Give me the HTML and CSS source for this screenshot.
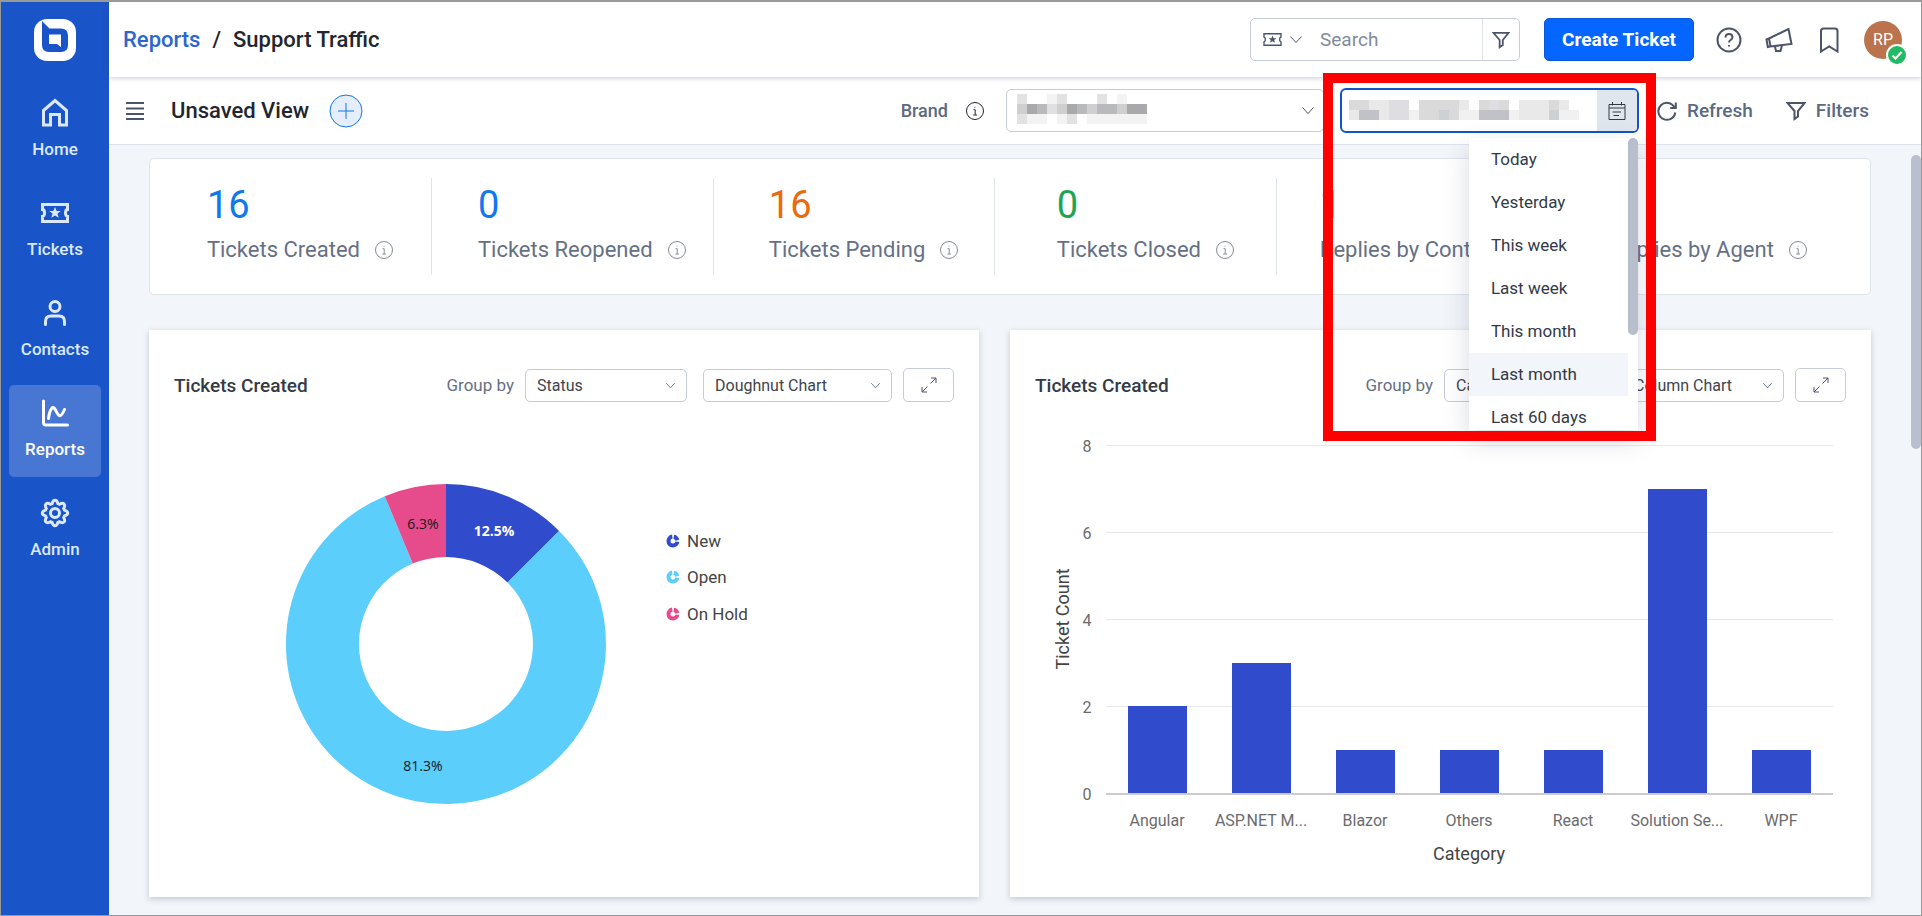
FILE: index.html
```html
<!DOCTYPE html>
<html lang="en">
<head>
	<meta charset="UTF-8">
	<meta name="viewport" content="width=device-width">
	<title>Reports / Support Traffic</title>
	<link rel="stylesheet" href="styles.css">
</head>

<body>
	<!-- shared icons -->
	<svg class="sprite" aria-hidden="true">
		<symbol id="info" viewBox="0 0 20 20">
			<circle cx="10" cy="10" r="8.5"/>
			<path d="M8.5 8.7H10.2V13.8M8.3 14H12M10 5.8V6.6"/>
		</symbol>
		<symbol id="ticket" viewBox="0 0 30 22">
			<path d="M2.5 2.5H27.5V7.5A2 3.5 0 0 0 27.5 14.5V19.5H2.5V14.5A2 3.5 0 0 0 2.5 7.5Z"/>
			<path class="solid" d="M15 5L16.6 9H20.8L17.5 11.6L18.7 15.8L15 13.4L11.3 15.8L12.5 11.6L9.2 9H13.4Z"/>
		</symbol>
		<symbol id="chevron" viewBox="0 0 14 9">
			<path d="M1.5 1.5L7 7.5L12.5 1.5"/>
		</symbol>
		<symbol id="funnel" viewBox="0 0 20 20">
			<path d="M1.5 2H18.5L12 10V15.5L8.5 18V10Z"/>
		</symbol>
		<symbol id="expand" viewBox="0 0 18 18">
			<path d="M11 2H16V7M16 2L10.5 7.5M7 16H2V11M2 16L7.5 10.5"/>
		</symbol>
		<symbol id="ring" viewBox="0 0 14 14">
			<path d="M7.8 2.8A4.5 4.5 0 0 1 11.3 6.2M11.4 7.7A4.5 4.5 0 1 1 6.3 2.6"/>
		</symbol>
	</svg>

	<nav class="sidebar">
		<svg class="logo" viewBox="0 0 42 42">
			<rect width="42" height="42" rx="13" fill="#fff"/>
			<path d="M8 2L15.5 9.5H27Q34 9.5 34 16.5V26Q34 33 27 33H15Q8 33 8 26Z" fill="#1a54c9"/>
			<path d="M15 15.5H27V28L23 25H15Z" fill="#fff"/>
		</svg>
		<a href="#" class="nav-item">
			<svg viewBox="0 0 30 30"><path d="M3.5 12.5L15 2.5L26.5 12.5V27H19.5V16.5H10.5V27H3.5Z"/></svg>
			<span>Home</span>
		</a>
		<a href="#" class="nav-item">
			<svg viewBox="0 -4 30 30"><use href="#ticket" width="30" height="22"/></svg>
			<span>Tickets</span>
		</a>
		<a href="#" class="nav-item">
			<svg viewBox="0 0 30 30"><circle cx="15" cy="8.5" r="5"/><path d="M5.5 26.5V23.5Q5.5 18 11 18H19Q24.5 18 24.5 23.5V26.5"/></svg>
			<span>Contacts</span>
		</a>
		<a href="#" class="nav-item active">
			<svg viewBox="0 0 30 30"><path d="M3.5 3V24.5Q3.5 27 6 27H27.5M8.5 20.5C10 10 13 7 15.5 12S20 22 24.5 11.5"/></svg>
			<span>Reports</span>
		</a>
		<a href="#" class="nav-item">
			<svg viewBox="0 0 30 30">
				<circle cx="15" cy="15" r="4.5"/>
				<path d="M12.1 5.6Q13 2.3 15 2.3T17.9 5.6L19.6 6.3Q22.6 4.6 24 6T23.7 10.4L24.4 12.1Q27.7 13 27.7 15T24.4 17.9L23.7 19.6Q25.4 22.6 24 24T19.6 23.7L17.9 24.4Q17 27.7 15 27.7T12.1 24.4L10.4 23.7Q7.4 25.4 6 24T6.3 19.6L5.6 17.9Q2.3 17 2.3 15T5.6 12.1L6.3 10.4Q4.6 7.4 6 6T10.4 6.3Z"/>
			</svg>
			<span>Admin</span>
		</a>
	</nav>

	<div class="page">
		<header class="topbar">
			<div class="breadcrumb">
				<a href="#">Reports</a>
				<span>/</span>
				<span>Support Traffic</span>
			</div>
			<div class="search">
				<button type="button" class="search-type" aria-label="Search in">
					<svg class="icon-ticket"><use href="#ticket"/></svg>
					<svg class="icon-chevron"><use href="#chevron"/></svg>
				</button>
				<input type="text" placeholder="Search" aria-label="Search">
				<button type="button" class="search-filter" aria-label="Search filter">
					<svg class="icon-filter"><use href="#funnel"/></svg>
				</button>
			</div>
			<button type="button" class="create">Create Ticket</button>
			<div class="tools">
				<button type="button" aria-label="Help">
					<svg viewBox="0 0 28 28"><circle cx="14" cy="14" r="11.5"/><path d="M10.5 11.5Q10.5 8 14 8T17.5 11.3Q17.5 13 15.6 14Q14 15 14 16.5M14 19V20.5"/></svg>
				</button>
				<button type="button" aria-label="Announcements">
					<svg viewBox="0 0 28 28"><path d="M4 12.5L23.5 3L26.5 18L5.5 20.5ZM1.5 13.5L4 12.5L5.5 20.5L2.8 21ZM10 20.5L11 25H15.5L17 19.5"/></svg>
				</button>
				<button type="button" aria-label="Bookmarks">
					<svg viewBox="0 0 28 28"><path d="M6 5Q6 2.5 8.5 2.5H20Q22.5 2.5 22.5 5V25.5L14.2 20.5L6 25.5Z"/></svg>
				</button>
			</div>
			<div class="avatar">RP
				<svg class="status" viewBox="0 0 22 22"><circle cx="11" cy="11" r="10"/><path d="M6.5 11.5L9.5 14.5L15.5 8"/></svg>
			</div>
		</header>

		<div class="viewbar">
			<button type="button" class="plain" aria-label="Views">
				<svg class="icon-menu" viewBox="0 0 18 18"><path d="M0 1H18M0 6.5H18M0 12H18M0 17H18"/></svg>
			</button>
			<h1>Unsaved View</h1>
			<button type="button" class="plain" aria-label="Save view">
				<svg class="icon-plus" viewBox="0 0 34 34"><circle cx="17" cy="17" r="16"/><path d="M9 17H25M17 9V25"/></svg>
			</button>
			<label class="brand-label" for="brand">Brand</label>
			<svg class="icon-info dark"><use href="#info"/></svg>
			<div class="select brand">
				<select id="brand"><option></option></select>
				<svg class="arrow"><use href="#chevron"/></svg>
				<svg class="mosaic" viewBox="0 0 130 30">
					<path fill="#e2e2e2" d="M0 0H10V10H0ZM40 0H50V10H40ZM0 20H10V30H0ZM50 20H60V30H50ZM80 0H90V10H80Z"/>
					<path fill="#f3f3f3" d="M10 20H30V30H10ZM40 20H50V30H40ZM70 20H130V30H70ZM30 0H40V10H30ZM100 0H110V10H100Z"/>
					<path fill="#cfcfcf" d="M0 10H10V20H0ZM40 10H50V20H40ZM60 10H80V20H60ZM100 10H110V20H100Z"/>
					<path fill="#a9a9ac" d="M10 10H20V20H10ZM50 10H60V20H50ZM110 10H130V20H110Z"/>
					<path fill="#b9babd" d="M20 10H30V20H20ZM60 10H70V20H60ZM80 10H100V20H80Z"/>
					<path fill="#e0e0e3" d="M30 10H40V20H30Z"/>
				</svg>
			</div>
			<div class="daterange">
				<input type="text" aria-label="Date range">
				<button type="button" aria-label="Pick dates">
					<svg viewBox="0 0 18 20"><path d="M1 3.5H17V18.5H1ZM1 7H17M4.5 1V4.5M13.5 1V4.5M4.5 11H13M5.5 14.5H11"/></svg>
				</button>
				<svg class="mosaic" viewBox="0 0 230 20">
					<path fill="#dadada" d="M0 0H20V10H0ZM70 0H110V20H70ZM130 0H140V10H130ZM150 0H160V10H150ZM200 0H210V20H200Z"/>
					<path fill="#e9e9ea" d="M20 0H40V10H20ZM0 10H10V20H0ZM30 10H40V20H30ZM110 0H120V10H110ZM170 0H200V20H170ZM210 0H220V10H210Z"/>
					<path fill="#dedee2" d="M40 0H60V20H40ZM140 0H150V10H140Z"/>
					<path fill="#f1f1f2" d="M60 10H70V20H60ZM110 10H130V20H110ZM160 10H170V20H160ZM210 10H230V20H210Z"/>
					<path fill="#c0c2c8" d="M10 10H30V20H10ZM130 10H160V20H130Z"/>
					<path fill="#cdd0d4" d="M90 10H100V20H90ZM200 10H210V20H200Z"/>
				</svg>
				<ul class="menu">
					<li>Today</li>
					<li>Yesterday</li>
					<li>This week</li>
					<li>Last week</li>
					<li>This month</li>
					<li class="hover">Last month</li>
					<li>Last 60 days</li>
				</ul>
				<div class="highlight"></div>
			</div>
			<button type="button" class="action">
				<svg viewBox="0 0 20 20"><path d="M17.5 6.5A8.5 8.5 0 1 0 18.3 11.5M18.8 1.5V7H13.3"/></svg>
				Refresh
			</button>
			<button type="button" class="action">
				<svg><use href="#funnel"/></svg>
				Filters
			</button>
		</div>

		<main>
			<section class="stats">
				<div class="stat">
					<div>
						<div class="count blue">16</div>
						<div class="caption">Tickets Created <svg class="icon-info"><use href="#info"/></svg></div>
					</div>
				</div>
				<div class="stat">
					<div>
						<div class="count blue">0</div>
						<div class="caption">Tickets Reopened <svg class="icon-info"><use href="#info"/></svg></div>
					</div>
				</div>
				<div class="stat">
					<div>
						<div class="count orange">16</div>
						<div class="caption">Tickets Pending <svg class="icon-info"><use href="#info"/></svg></div>
					</div>
				</div>
				<div class="stat">
					<div>
						<div class="count green">0</div>
						<div class="caption">Tickets Closed <svg class="icon-info"><use href="#info"/></svg></div>
					</div>
				</div>
				<div class="stat">
					<div>
						<div class="count purple">1</div>
						<div class="caption">Replies by Contact <svg class="icon-info"><use href="#info"/></svg></div>
					</div>
				</div>
				<div class="stat">
					<div>
						<div class="count purple">0</div>
						<div class="caption">Replies by Agent <svg class="icon-info"><use href="#info"/></svg></div>
					</div>
				</div>
			</section>

			<div class="cards">
				<section class="card">
					<div class="card-head">
						<h2>Tickets Created</h2>
						<label for="group1">Group by</label>
						<div class="select group">
							<select id="group1"><option>Status</option></select>
							<svg class="arrow"><use href="#chevron"/></svg>
						</div>
						<div class="select doughnut">
							<select aria-label="Chart type"><option>Doughnut Chart</option></select>
							<svg class="arrow"><use href="#chevron"/></svg>
						</div>
						<button type="button" class="expand" aria-label="Expand"><svg><use href="#expand"/></svg></button>
					</div>
					<svg class="chart" viewBox="0 0 780 495">
						<!-- 12.5% / 81.3% / 6.3% slices -->
						<path fill="#304bcb" d="M272 82A160 160 0 0 1 385.1 128.9L333.5 180.5A87 87 0 0 0 272 155Z"/>
						<path fill="#5bcefb" d="M385.1 128.9A160 160 0 1 1 210.8 94.2L238.7 161.6A87 87 0 1 0 333.5 180.5Z"/>
						<path fill="#e64b8b" d="M210.8 94.2A160 160 0 0 1 272 82V155A87 87 0 0 0 238.7 161.6Z"/>
						<g class="slice-label">
							<text class="light" x="320" y="134">12.5%</text>
							<text x="249" y="127">6.3%</text>
							<text x="249" y="369">81.3%</text>
						</g>
						<g class="legend">
							<use href="#ring" x="492" y="132" width="14" height="14" stroke="#304bcb"/>
							<text x="513" y="145">New</text>
							<use href="#ring" x="492" y="168" width="14" height="14" stroke="#5bcefb"/>
							<text x="513" y="181">Open</text>
							<use href="#ring" x="492" y="205" width="14" height="14" stroke="#e64b8b"/>
							<text x="513" y="218">On Hold</text>
						</g>
					</svg>
				</section>

				<section class="card">
					<div class="card-head">
						<h2>Tickets Created</h2>
						<label for="group2">Group by</label>
						<div class="select group">
							<select id="group2"><option>Category</option></select>
							<svg class="arrow"><use href="#chevron"/></svg>
						</div>
						<div class="select column">
							<select aria-label="Chart type"><option>Column Chart</option></select>
							<svg class="arrow"><use href="#chevron"/></svg>
						</div>
						<button type="button" class="expand" aria-label="Expand"><svg><use href="#expand"/></svg></button>
					</div>
					<svg class="chart" viewBox="0 0 811 495">
						<path class="gridline" d="M71 43.5H798M71 130.5H798M71 217.5H798M71 304.5H798"/>
						<path class="baseline" d="M71 392H798"/>
						<g fill="#304bcb">
							<rect x="93" y="304" width="59" height="87"/>
							<rect x="197" y="261" width="59" height="130"/>
							<rect x="301" y="348" width="59" height="43"/>
							<rect x="405" y="348" width="59" height="43"/>
							<rect x="509" y="348" width="59" height="43"/>
							<rect x="613" y="87" width="59" height="304"/>
							<rect x="717" y="348" width="59" height="43"/>
						</g>
						<g class="axis">
							<text x="52" y="50">8</text>
							<text x="52" y="137">6</text>
							<text x="52" y="224">4</text>
							<text x="52" y="311">2</text>
							<text x="52" y="398">0</text>
							<text x="122" y="424">Angular</text>
							<text x="226" y="424">ASP.NET M...</text>
							<text x="330" y="424">Blazor</text>
							<text x="434" y="424">Others</text>
							<text x="538" y="424">React</text>
							<text x="642" y="424">Solution Se...</text>
							<text x="746" y="424">WPF</text>
						</g>
						<g class="axis-title">
							<text x="434" y="458">Category</text>
							<text transform="translate(34 217) rotate(-90)">Ticket Count</text>
						</g>
					</svg>
				</section>
			</div>
			<div class="scroll-thumb"></div>
		</main>
	</div>
</body>
</html>
```

FILE: styles.css
```css
* {
	box-sizing: border-box;
}

body {
	display: flex;
	margin: 0;
	height: 100vh;
	overflow: hidden;
	border: 1px solid #999;
	border-top-width: 2px;
	background-color: #f2f5f9;
	font-family: Roboto, "Liberation Sans", sans-serif;
	color: #22262e;
}

button, input, select {
	font-family: inherit;
	margin: 0;
}

button {
	cursor: pointer;
}

a {
	text-decoration: none;
}

svg {
	display: block;
	flex: none;
	fill: none;
	stroke: currentColor;
}

.sprite {
	position: absolute;
	width: 0;
	height: 0;
}

/* sidebar */
.sidebar {
	display: flex;
	flex-direction: column;
	align-items: center;
	gap: 8px;
	flex: none;
	width: 108px;
	padding-top: 17px;
	background-color: #1a54c9;
}

.logo {
	width: 42px;
	height: 42px;
	margin-bottom: 16px;
	stroke: none;
}

.nav-item {
	display: flex;
	flex-direction: column;
	align-items: center;
	gap: 9px;
	width: 92px;
	height: 92px;
	padding-top: 13px;
	border-radius: 5px;
	color: #dce9fd;
	font-size: 17px;
	font-weight: 500;
	line-height: 24px;
}

.nav-item svg {
	width: 30px;
	height: 30px;
	stroke-width: 3;
	stroke-linecap: round;
}

.nav-item.active {
	background-color: #4876d3;
	color: #fff;
}

.solid {
	fill: currentColor;
	stroke: none;
}

/* top bar */
.page {
	display: flex;
	flex-direction: column;
	flex: 1;
	min-width: 0;
}

.topbar {
	display: flex;
	align-items: center;
	position: relative;
	z-index: 1;
	height: 75px;
	padding: 0 19px 0 14px;
	background-color: #fff;
	box-shadow: 0 1px 5px rgba(40, 50, 80, 0.25);
}

.breadcrumb {
	display: flex;
	gap: 12px;
	margin-right: auto;
	font-size: 22px;
	font-weight: 500;
}

.breadcrumb a {
	color: #2c66cd;
}

.search {
	display: flex;
	width: 270px;
	height: 43px;
	margin-right: 24px;
	border: 1px solid #c5cbd8;
	border-radius: 5px;
	overflow: hidden;
}

.search button, .plain, .action, .tools button, .daterange button {
	display: flex;
	align-items: center;
	justify-content: center;
	padding: 0;
	border: none;
	background: none;
	color: #4c5568;
}

.search .search-type {
	gap: 6px;
	width: 62px;
}

.search input {
	flex: 1;
	min-width: 0;
	padding: 0 7px;
	border: none;
	outline: none;
	font-size: 19px;
}

.search input::placeholder {
	color: #828b9b;
}

.search .search-filter {
	width: 37px;
	border-left: 1px solid #dfe3ea;
}

.icon-ticket {
	width: 21px;
	height: 15px;
	stroke-width: 2;
}

.icon-chevron {
	width: 14px;
	height: 9px;
}

.icon-filter {
	width: 18px;
	height: 18px;
	stroke-width: 2;
}

.create {
	width: 150px;
	height: 43px;
	margin-right: 21px;
	padding: 0;
	border: 1px solid #0a56d8;
	border-radius: 5px;
	background-color: #0566ff;
	color: #fff;
	font-size: 19px;
	font-weight: 700;
}

.tools {
	display: flex;
	gap: 22px;
	margin-right: 21px;
}

.tools svg {
	width: 28px;
	height: 28px;
	stroke-width: 2;
}

.avatar {
	position: relative;
	width: 38px;
	height: 38px;
	border-radius: 50%;
	background-color: #bb734d;
	color: #fff;
	font-size: 16px;
	line-height: 38px;
	text-align: center;
}

.status {
	position: absolute;
	right: -6px;
	bottom: -7px;
	width: 22px;
	height: 22px;
	fill: #21bb63;
	stroke: #fff;
	stroke-width: 2;
}

.status path {
	fill: none;
}

/* view bar */
.viewbar {
	display: flex;
	align-items: center;
	height: 68px;
	padding: 0 52px 0 17px;
	border-bottom: 1px solid #dde2ea;
	background-color: #fff;
}

.icon-menu {
	width: 18px;
	height: 18px;
	color: #4c5568;
	stroke-width: 2;
}

h1 {
	margin: 0 20px 0 27px;
	font-size: 22px;
	font-weight: 500;
}

.icon-plus {
	width: 34px;
	height: 34px;
	color: #1673e6;
	fill: #e4eefc;
}

.brand-label {
	margin-left: auto;
	margin-right: 17px;
	color: #5c6a80;
	font-size: 18px;
	font-weight: 500;
}

.icon-info {
	width: 20px;
	height: 20px;
	color: #858a94;
}

.icon-info.dark {
	margin-right: 21px;
	color: #22262e;
}

.select {
	position: relative;
}

.select select {
	display: block;
	appearance: none;
	width: 100%;
	height: 33px;
	padding: 0 11px;
	border: 1px solid #c5cbd8;
	border-radius: 5px;
	background-color: #fff;
	color: #40444d;
	font-size: 16px;
}

.arrow {
	position: absolute;
	top: 13px;
	right: 11px;
	width: 11px;
	height: 7px;
	color: #4c5568;
	pointer-events: none;
}

.brand {
	width: 318px;
	margin-right: 16px;
}

.brand select {
	height: 43px;
}

.brand .arrow {
	top: 17px;
	right: 9px;
	width: 14px;
	height: 9px;
}

.mosaic {
	position: absolute;
	stroke: none;
	pointer-events: none;
}

.brand .mosaic {
	top: 5px;
	left: 11px;
	width: 130px;
}

.daterange {
	display: flex;
	position: relative;
	z-index: 2;
	width: 299px;
	height: 45px;
	margin-right: 18px;
	border: 2px solid #0f55c8;
	border-radius: 6px;
	background-color: #fff;
}

.daterange input {
	flex: 1;
	min-width: 0;
	border: none;
	outline: none;
	background: none;
}

.daterange button {
	width: 40px;
	border-radius: 0 4px 4px 0;
	background-color: #dfe6ee;
	color: #333a46;
}

.daterange button svg {
	width: 18px;
	height: 20px;
}

.daterange .mosaic {
	top: 10px;
	left: 7px;
	width: 230px;
}

.menu {
	position: absolute;
	top: 48px;
	right: -1px;
	width: 169px;
	height: 292px;
	margin: 0;
	padding: 0;
	overflow: hidden;
	list-style: none;
	background-color: #fff;
	box-shadow: 0 10px 24px rgba(60, 70, 100, 0.2);
	color: #333a46;
	font-size: 17px;
	line-height: 43px;
}

.menu::after {
	content: "";
	position: absolute;
	top: 0;
	right: 0;
	width: 10px;
	height: 197px;
	border-radius: 5px;
	background-color: #b7becc;
}

.menu li {
	margin-right: 10px;
	padding-left: 22px;
}

.menu li.hover {
	background-color: #f2f5f9;
}

.highlight {
	position: absolute;
	top: -17px;
	left: -19px;
	width: 333px;
	height: 368px;
	border: 10px solid #f00;
	pointer-events: none;
}

.action {
	gap: 10px;
	color: #5c6a80;
	font-size: 19px;
	font-weight: 500;
}

.action + .action {
	margin-left: 33px;
}

.action svg {
	width: 20px;
	height: 20px;
	color: #4c5568;
	stroke-width: 2;
}

/* counters */
main {
	position: relative;
	flex: 1;
	padding: 13px 50px 18px 40px;
}

.stats {
	display: flex;
	margin-bottom: 35px;
	padding: 19px 30px 19px 0;
	border: 1px solid #dfe3ea;
	border-radius: 5px;
	background-color: #fff;
}

.stat {
	display: flex;
	justify-content: center;
	flex: 1;
	height: 97px;
	padding: 4px 0 0 20px;
	border-right: 1px solid #dfe3ea;
	white-space: nowrap;
}

.stat:last-child {
	border-right: none;
}

.count {
	margin-bottom: 8px;
	font-size: 38px;
	line-height: 46px;
}

.blue {
	color: #0f78ec;
}

.orange {
	color: #eb6a0c;
}

.green {
	color: #1ea554;
}

.purple {
	color: #6347b8;
}

.caption {
	display: flex;
	align-items: center;
	gap: 14px;
	color: #667085;
	font-size: 22px;
	line-height: 28px;
}

/* chart cards */
.cards {
	display: grid;
	grid-template-columns: 830fr 861fr;
	gap: 31px;
}

.card {
	padding: 38px 25px 0;
	background-color: #fff;
	box-shadow: 0 2px 6px rgba(60, 70, 100, 0.25);
}

.card-head {
	display: flex;
	align-items: center;
	height: 34px;
}

h2 {
	margin: 0 auto 0 0;
	color: #333a46;
	font-size: 19px;
	font-weight: 500;
}

.card-head label {
	margin-right: 11px;
	color: #667085;
	font-size: 17px;
}

.group {
	width: 162px;
	margin-right: 16px;
}

.doughnut {
	width: 189px;
}

.column {
	width: 162px;
}

.expand {
	display: flex;
	align-items: center;
	justify-content: center;
	width: 51px;
	height: 34px;
	margin-left: 11px;
	padding: 0;
	border: 1px solid #c5cbd8;
	border-radius: 5px;
	background-color: #fff;
	color: #4c5568;
}

.expand svg {
	width: 18px;
	height: 18px;
}

.chart {
	width: 100%;
	stroke: none;
}

.chart text {
	text-anchor: middle;
}

.slice-label {
	fill: #16181d;
	font-family: "Open Sans", sans-serif;
	font-size: 14px;
}

.slice-label .light {
	fill: #fff;
	font-weight: 700;
}

.legend use {
	stroke-width: 4;
}

.chart .legend text {
	fill: #444;
	font-size: 17px;
	text-anchor: start;
}

.gridline {
	stroke: #e5e7ea;
}

.baseline {
	stroke: #ccc;
	stroke-width: 2;
}

.axis {
	fill: #6b6b6b;
	font-size: 16px;
}

.axis-title {
	fill: #444;
	font-size: 18px;
}

.scroll-thumb {
	position: absolute;
	top: 10px;
	right: 0;
	width: 10px;
	height: 294px;
	border-radius: 5px;
	background-color: #b9bfce;
}
```
